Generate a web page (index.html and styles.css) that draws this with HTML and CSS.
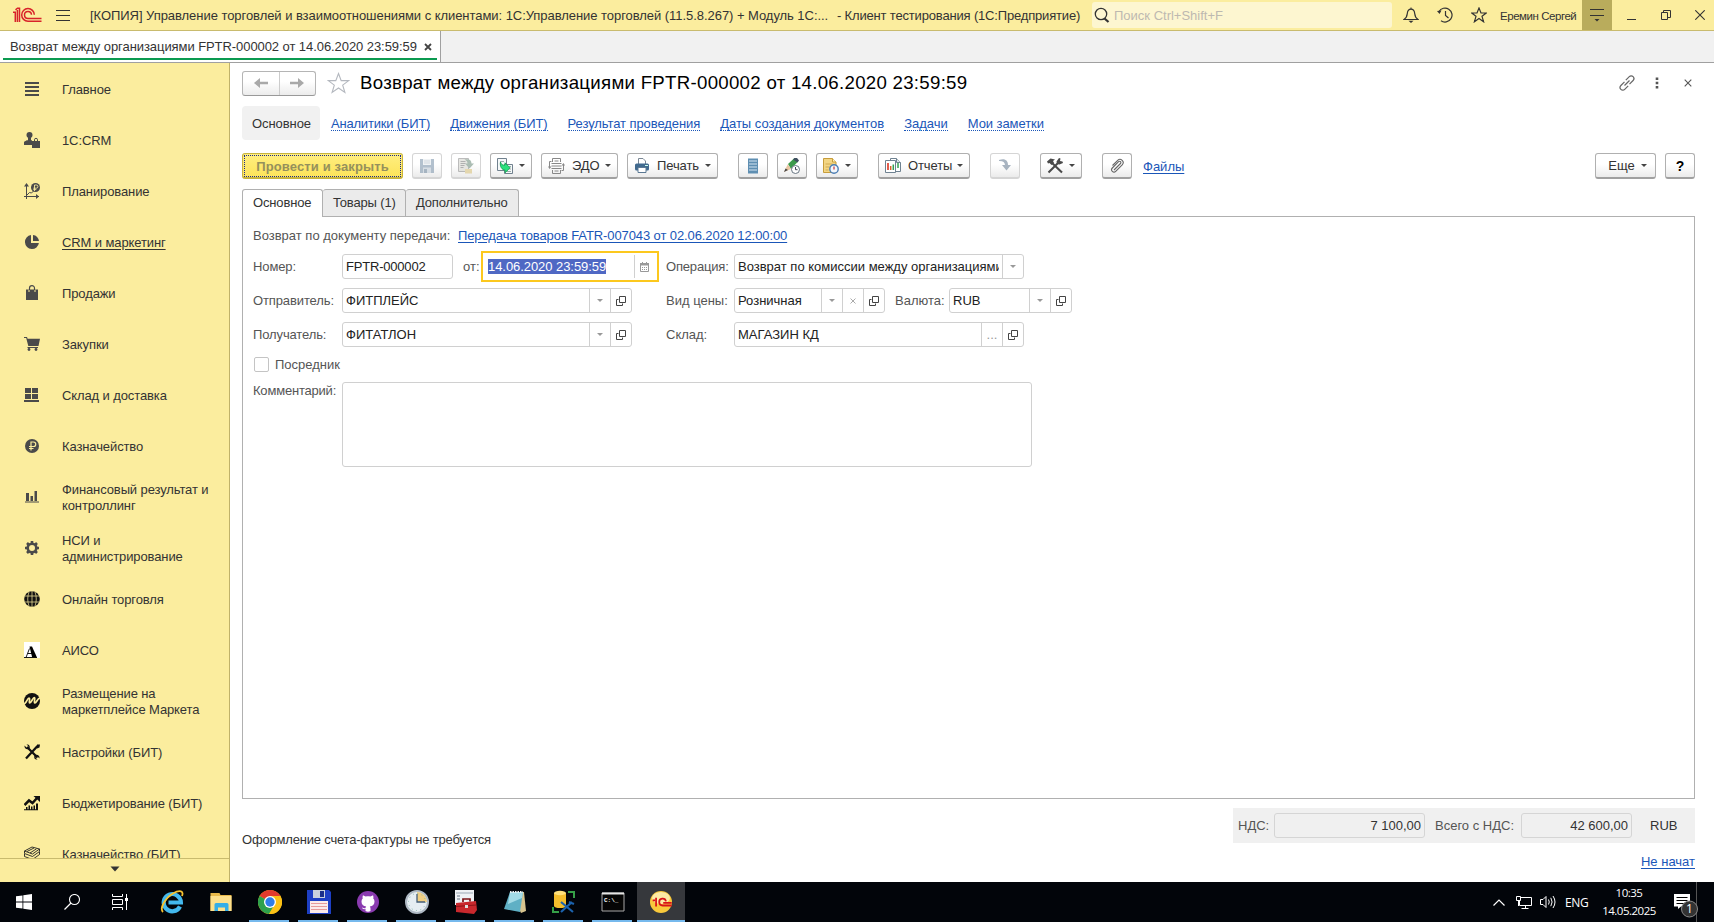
FILE: index.html
```html
<!DOCTYPE html>
<html lang="ru">
<head>
<meta charset="utf-8">
<title>Возврат между организациями</title>
<link rel="stylesheet" href="styles.css">
</head>
<body>
<svg class="defs" width="0" height="0">
  <symbol id="open" viewBox="0 0 10 10"><path d="M3.500.5h6v6h-6zM2.500 3.500h-2v6h6v-2" fill="none" stroke="#444"/></symbol>
  <symbol id="logo" viewBox="0 0 30 16"><g fill="none" stroke="#d8232a" stroke-width="1.500"><path d="M1 5.300h2.300V15M3.500 2.800 5.500 1.200h2V15M5.400 3v12"/><path d="M22.300 7.800a6.300 6.300 0 1 0-6.300 6.400h13.500M19.500 7.800a3.500 3.500 0 1 0-3.500 3.700h13.500"/></g></symbol>
</svg>

<header class="titlebar">
  <svg class="logo" viewBox="0 0 30 16"><use href="#logo"/></svg>
  <svg class="burger" viewBox="0 0 14 12"><path d="M0 1.500h14M0 6.500h14M0 11.500h14" stroke="#333"/></svg>
  <div class="app-title"><span class="t t1">[КОПИЯ] Управление торговлей и взаимоотношениями с клиентами: 1С:Управление торговлей (11.5.8.267) + Модуль 1С:...</span><span class="t t2">- Клиент тестирования (1С:Предприятие)</span></div>
  <div class="search"><svg viewBox="0 0 16 16"><circle cx="7" cy="7" r="5.700" fill="none" stroke="#333" stroke-width="1.300"/><path d="M10.500 11.500 14.500 15" stroke="#333" stroke-width="2.200"/></svg><span class="t">Поиск Ctrl+Shift+F</span></div>
  <div class="top-icons">
    <svg viewBox="0 0 16 16"><path d="M1 12.500c2.500-1.500 3-3 3.300-6C4.600 3.500 6 2.200 8 2.200s3.400 1.300 3.700 4.300c.3 3 .8 4.500 3.300 6z" fill="none" stroke="#333" stroke-width="1.200"/><path d="M8 .5v2" stroke="#333"/><path d="M5.500 13.800h5L8 16z" fill="#333"/></svg>
    <svg viewBox="0 0 16 16"><path d="M2 4.500A7 7 0 1 1 4 13.800M8.500 4v4.500l3 2.500" fill="none" stroke="#333" stroke-width="1.200"/><path d="M0 4l4.500-.5L2.500 7z" fill="#333"/></svg>
    <svg viewBox="0 0 16 16"><path d="M8 1l2 5h5.300l-4.300 3.300 1.600 5.500L8 11.600l-4.600 3.200L5 9.300.7 6H6z" fill="none" stroke="#333" stroke-width="1.200"/></svg>
  </div>
  <span class="t user">Еремин Сергей</span>
  <div class="menu-btn"><svg viewBox="0 0 14 14"><path d="M0 1.500h14M0 7.500h14" stroke="#333"/><path d="M4.500 11h5L7 13.500z" fill="#333"/></svg></div>
  <div class="win-icons">
    <svg viewBox="0 0 10 10"><path d="M0 9.500h9" stroke="#333"/></svg>
    <svg viewBox="0 0 10 10"><path d="M.5 2.500h6v7h-6zM2.500 2.500v-2h7v7h-3" fill="none" stroke="#333"/></svg>
    <svg viewBox="0 0 10 10"><path d="M.3.3l9.400 9.400M9.700.3.3 9.700" stroke="#333" stroke-width="1.100"/></svg>
  </div>
</header>

<div class="tabbar">
  <div class="wtab"><span class="t">Возврат между организациями FPTR-000002 от 14.06.2020 23:59:59</span><svg viewBox="0 0 8 8"><path d="M1 1l6 6M7 1 1 7" stroke="#444" stroke-width="1.800"/></svg></div>
</div>

<div class="main">
  <aside class="side">
    <nav class="side-list">
      <a><svg viewBox="0 0 16 16"><path d="M1 2h14M1 6h14M1 10h14M1 14h14" stroke="#4a4a4a" stroke-width="2"/></svg><span class="t">Главное</span></a>
      <a><svg viewBox="0 0 16 16" fill="#4a4a4a"><circle cx="5.500" cy="3" r="3"/><path d="M4 5h3v3l1 .5V13H0v-2.500C0 9 3 8.500 4 8zM8 9h8v7H8z"/><path d="M10.500 9V7.800a1.500 1.500 0 0 1 3 0V9" fill="none" stroke="#4a4a4a"/></svg><span class="t">1С:CRM</span></a>
      <a><svg viewBox="0 0 16 16"><path d="M2.500 1v15M0 13.500h15M3 12l2.500-2.500 2 .5L10 7.500" fill="none" stroke="#4a4a4a"/><path d="M0 3.500 2.500 0 5 3.500zM12 11l3 2.500-3 2.500z" fill="#4a4a4a"/><circle cx="11.500" cy="4.500" r="4.500" fill="#4a4a4a"/><path d="M10.500 8V2h1.800a1.500 1.500 0 0 1 0 3.200H9.300M9.300 6.600h3" stroke="#fbed9e" stroke-width=".9" fill="none"/></svg><span class="t">Планирование</span></a>
      <a class="on"><svg viewBox="0 0 16 16" fill="#4a4a4a"><path d="M7 1.100V9h7.900A7 7 0 1 1 7 1.100z"/><path d="M9 1a6.500 6.500 0 0 1 6 6H9z"/></svg><span class="t">CRM и маркетинг</span></a>
      <a><svg viewBox="0 0 16 16"><path d="M2 4.500h12V15H2z" fill="#4a4a4a"/><path d="M5 7V4.500M11 7V4.500" stroke="#fbed9e"/><path d="M5.500 5V3.200a2.500 2.500 0 0 1 5 0V5" fill="none" stroke="#4a4a4a" stroke-width="1.200"/></svg><span class="t">Продажи</span></a>
      <a><svg viewBox="0 0 16 16" fill="#4a4a4a"><path d="M0 1h3l.6 1.800H16L14.500 10H4.300L2.200 2H0zM3.500 11H14v1H3.500z"/><circle cx="5" cy="13.500" r="1.400"/><circle cx="12" cy="13.500" r="1.400"/></svg><span class="t">Закупки</span></a>
      <a><svg viewBox="0 0 16 16" fill="#4a4a4a"><path d="M1 1h6v5H1zM8 1h6v5H8zM1 7h6v5H1zM8 7h6v5H8zM0 13h15v2H0z"/></svg><span class="t">Склад и доставка</span></a>
      <a><svg viewBox="0 0 16 16"><circle cx="8" cy="8" r="7" fill="#4a4a4a"/><path d="M7 12.500V4h2.500a2 2 0 0 1 0 4.500H5M5 10.500h4.500" stroke="#fbed9e" stroke-width="1.200" fill="none"/></svg><span class="t">Казначейство</span></a>
      <a><svg viewBox="0 0 16 16" fill="#4a4a4a"><path d="M2 4h3v8H2zM6.500 7h2.500v5H6.500zM10.500 2h2.500v10h-2.500zM1 12.500h14v1H1z"/></svg><span class="t">Финансовый результат и<br>контроллинг</span></a>
      <a><svg viewBox="0 0 16 16"><circle cx="8" cy="8" r="4.300" fill="none" stroke="#4a4a4a" stroke-width="2.600"/><path d="M8 1v2.500M8 12.500V15M1 8h2.500M12.500 8H15M3 3l2 2M11 11l2 2M13 3l-2 2M5 11l-2 2" stroke="#4a4a4a" stroke-width="2.600"/></svg><span class="t">НСИ и<br>администрирование</span></a>
      <a><svg viewBox="0 0 16 16"><circle cx="8" cy="8" r="7.800" fill="#111"/><path d="M8 0v16M.5 5h15M.5 11h15M5 1C3.300 5.500 3.300 10.500 5 15M11 1c1.700 4.500 1.700 9.500 0 14" stroke="#fbed9e" stroke-width=".7" fill="none"/></svg><span class="t">Онлайн торговля</span></a>
      <a><svg viewBox="0 0 16 16"><path d="M0 0h16v16H0z" fill="#fff"/><path d="M5.500 4.500h2.500L13 15.500H8.200z" fill="#000"/><path d="M5.500 6.500 2 15.500M4 11.500h4M0 15.500h13" stroke="#000" stroke-width=".9"/></svg><span class="t">АИСО</span></a>
      <a><svg viewBox="0 0 16 16"><circle cx="8" cy="8" r="8" fill="#111"/><path d="M0 11c2 0 3.500-6 5-6s-.5 5 .8 5S9 4.500 10.300 4.500 9.500 10 11 10c1.500 0 2.500-5 5-5" stroke="#fbed9e" stroke-width="1.700" fill="none"/></svg><span class="t">Размещение на<br>маркетплейсе Маркета</span></a>
      <a><svg viewBox="0 0 16 16"><path d="M3 3l10.500 10.500M13.500 2 2 14.500" stroke="#111" stroke-width="2.300"/><path d="M.5 1.500 3 4l1.500-1.800L2.500.5C5 0 6.500 2 5.500 4.500 3.500 6 0 5 .5 1.500zM15.500 14.500 13 12l-1.500 1.800 2 1.700c-2.500.5-4-1.500-3-4 2-1.500 5.500-.5 5 3zM13 .5l3 0-.5 3-2.500 1z" fill="#111"/></svg><span class="t">Настройки (БИТ)</span></a>
      <a><svg viewBox="0 0 16 16"><path d="M.5 10 5 5.500l3.500 2.500L13 3" stroke="#111" stroke-width="2.500" fill="none"/><path d="M9.500 1H16v6zM2 12h1.500v3H2zM4.500 10.500H6V15H4.500zM7 11.500h1.500V15H7zM9.500 10.500H11V15H9.500zM12 8.500h2V15h-2zM0 14.300h14v1H0z" fill="#111"/></svg><span class="t">Бюджетирование (БИТ)</span></a>
      <a><svg viewBox="0 0 16 16"><path d="M.5 5 8 1l7.500 2L8.500 8zM.5 5v2.500l8 3 7-5V3M.5 8v2.500l8 3 7-5V6M3 5.500 10 2M6 7l6.500-4.200" stroke="#222" fill="none" stroke-width=".9"/></svg><span class="t">Казначейство (БИТ)</span></a>
    </nav>
    <div class="side-more"><svg viewBox="0 0 10 6"><path d="M.5.5h9L5 5.500z" fill="#333"/></svg></div>
  </aside>

  <section class="doc">
    <div class="doc-head">
      <div class="nav-btns"><span><svg viewBox="0 0 14 10"><path d="M0 5l6-5v3.800h8v2.400H6V10z" fill="#a9a9a9"/></svg></span><span><svg viewBox="0 0 14 10"><path d="M14 5 8 0v3.800H0v2.400h8V10z" fill="#a9a9a9"/></svg></span></div>
      <svg class="fav" viewBox="0 0 23 22"><path d="M11.500 1.500l2.700 7.100h7.500l-6 4.500 2.200 7.400-6.400-4.500-6.400 4.500 2.200-7.400-6-4.500h7.500z" fill="none" stroke="#b4b8bf" stroke-width="1.100"/></svg>
      <h1><span class="t">Возврат между организациями FPTR-000002 от 14.06.2020 23:59:59</span></h1>
      <div class="head-icons">
        <svg class="i16" viewBox="0 0 16 16"><g fill="none" stroke="#666" stroke-width="1.200"><path d="M6.800 5.200l3.500-3.500a2.600 2.600 0 0 1 3.800 3.800L10.500 9.200M9.200 10.800l-3.500 3.500a2.600 2.600 0 0 1-3.800-3.800L5.500 6.800M5.500 10.500l5-5"/></g></svg>
        <svg class="dots" viewBox="0 0 4 12"><path d="M.7.500h2.600v2.600H.7zM.7 4.700h2.600v2.600H.7zM.7 8.900h2.600v2.600H.7z" fill="#555"/></svg>
        <svg class="i8" viewBox="0 0 8 8"><path d="M.7.7l6.600 6.600M7.300.7.7 7.300" stroke="#555" stroke-width="1.100"/></svg>
      </div>
    </div>

    <nav class="links">
      <span class="cur t">Основное</span><a class="t bit">Аналитики (БИТ)</a><a class="t">Движения (БИТ)</a><a class="t">Результат проведения</a><a class="t wide">Даты создания документов</a><a class="t wide">Задачи</a><a class="t">Мои заметки</a>
    </nav>

    <div class="toolbar">
      <button class="primary"><span class="t">Провести и закрыть</span></button>
      <button class="sq off"><svg viewBox="0 0 16 16"><path d="M1 1h14v14H1z" fill="#8ba0b4"/><path d="M4 1h8v6H4z" fill="#e8ecef"/><path d="M5 3h6M5 5h6" stroke="#b7c3cd"/><path d="M4 9.500h8V15H4z" fill="#c5d0da"/><path d="M5 11h3v4H5z" fill="#7d92a6"/></svg></button>
      <button class="sq off"><svg viewBox="0 0 16 16"><path d="M.5.5h10v13H.5z" fill="#dadad4" stroke="#999"/><path d="M2.500 3.500h5M2.500 5.500h5M2.500 7.500h4M2.500 9.500h3" stroke="#888"/><path d="M7 11h7v4.500H7z" fill="#ddc98a"/><path d="M6.500 1.500c4.500-1 7 .5 7 4H16l-4.500 5L7 5.500h2.500c0-1.800-1-3-3-4z" fill="#7f9a8c"/></svg></button>
      <button class="dd"><svg viewBox="0 0 16 16"><path d="M.5.5h9v12h-9z" fill="#f6f8f9" stroke="#71818e"/><path d="M3 3.500h4M3 6h2" stroke="#9aa"/><path d="M7.500 6.500h8v9h-8z" fill="#f6f8f9" stroke="#71818e"/><path d="M12 8.500h2M12 11h2M10 13.500h4" stroke="#9aa"/><path d="M3.500 4C4 6.500 5.500 7.500 8 7V4.800l5 5-4.800 5v-2.600C5 12 2.500 8.500 3.500 4z" fill="#2be07c" stroke="#0a9a4a" stroke-width=".8"/></svg><i></i></button>
      <button class="dd edo"><svg viewBox="0 0 17 16"><g fill="none" stroke="#888"><path d="M4.500 4V.5h8V4M4.500 12v3.500h8V12M3.500 5.500h10M3.500 8h10M3.500 10.500h10M6.500 3h4M6.500 13h4"/><path d="M3.500 3.500h-2v6M13.500 12.500h2v-6"/></g><path d="M0 8.500h3.500L1.500 11zM13.500 7.500H17L15.500 5z" fill="#888"/></svg><span class="t">ЭДО</span><i></i></button>
      <button class="dd prn"><svg viewBox="0 0 16 16"><path d="M4.500 6V.5H9L11.500 3v3" fill="#fff" stroke="#7a8794"/><rect x="1" y="5.500" width="14" height="7" rx="1.500" fill="#416a8f"/><path d="M4 9.500h8v5H4z" fill="#fff" stroke="#5b7893"/><path d="M11 7.500h3" stroke="#cfe"/></svg><span class="t">Печать</span><i></i></button>
      <button class="sq g20"><svg viewBox="0 0 16 16"><path d="M3 .5h10v15H3z" fill="#5f8fb2"/><path d="M4 3h8M4 6h8M4 9h8M4 12h8" stroke="#d5e6f1" stroke-width="1.200"/></svg></button>
      <button class="sq"><svg viewBox="0 0 16 16"><path d="M4 6l6.500-6L14 3.500 7 11z" fill="#3d9a4c"/><path d="M9 1.500 10.500 0H13l2 2.500-1.500 2z" fill="#3f4f60"/><path d="M3.800 6.200 7 11l-7 3z" fill="#e9c6a2"/><path d="M0 14l1.500-3.500L4 12z" fill="#444"/><circle cx="11.500" cy="11.500" r="4" fill="#fff" stroke="#667480"/><path d="M11.500 9v2.700h2" stroke="#445" fill="none"/></svg></button>
      <button class="dd"><svg viewBox="0 0 16 16"><path d="M.5.5h9L13 4v10.500H.5z" fill="#f3d684" stroke="#c79d3b"/><path d="M9.500.5V4H13" fill="#fff1c0" stroke="#c79d3b"/><path d="M2.500 6h7M2.500 9h4M2.500 12h3" stroke="#d1aa50"/><circle cx="11" cy="11" r="4.200" fill="#f3f7fb" stroke="#4b7db4" stroke-width="1.400"/><path d="M11 8.500v3" stroke="#c33" stroke-width="1.200"/></svg><i></i></button>
      <button class="dd rep g20"><svg viewBox="0 0 16 16"><path d="M5.500.5h6l4 4v9h-10z" fill="#fff" stroke="#6f8291"/><path d="M11.500.5v4h4" fill="#dfe6ea" stroke="#6f8291"/><path d="M.5 2.500h10v12H.500z" fill="#fff" stroke="#6f8291"/><path d="M3 5v7" stroke="#de3f2c" stroke-width="1.700"/><path d="M5.700 8v4" stroke="#d8632c" stroke-width="1.500"/><path d="M8.300 6.500V12M13 5v5" stroke="#35a351" stroke-width="1.500"/></svg><span class="t">Отчеты</span><i></i></button>
      <button class="sq off g20"><svg viewBox="0 0 16 16"><path d="M2 2c6-2 9 .5 9 5h3l-4.500 5.500L5 7h3C8 4.500 6 2.800 2 3z" fill="#7b8da0"/></svg></button>
      <button class="dd g20"><svg viewBox="0 0 16 16"><path d="M3.500 3.500 15 14.500M12 4 1.500 14.500" stroke="#4a4a4a" stroke-width="2.100"/><path d="M0 3.500 3.500.5 8 1.500 6 3l1 2-2.500 2-2-2L1 5.500zM9.500 3.500 12 0l1.500.5-.5 2.500 2.500.5.500 1.500-3.500 1.500-2.500-.5z" fill="#4a4a4a"/></svg><i></i></button>
      <button class="sq g20"><svg viewBox="0 0 16 16"><path d="M5 12l6.500-6.500a1.300 1.300 0 0 0-1.900-1.900L3.300 10a2.300 2.300 0 0 0 3.400 3.300l6.500-6.500a3.100 3.100 0 0 0-4.500-4.400L3.500 7.500" fill="none" stroke="#666" stroke-width="1.100"/></svg></button>
      <a class="files t">Файлы</a>
      <button class="more"><span class="t">Еще</span><i></i></button>
      <button class="help"><b>?</b></button>
    </div>

    <div class="ptabs"><span class="act"><span class="t">Основное</span></span><span><span class="t">Товары (1)</span></span><span><span class="t">Дополнительно</span></span></div>
    <div class="panel">
      <div class="r0"><span class="t lbl">Возврат по документу передачи:</span><a class="t">Передача товаров FATR-007043 от 02.06.2020 12:00:00</a></div>
      <div class="row">
        <span class="lbl l1"><span class="t">Номер:</span></span>
        <div class="fld w-num"><span class="t code">FPTR-000002</span></div>
        <span class="lbl l-ot"><span class="t">от:</span></span>
        <div class="fld date"><em><span class="t sel">14.06.2020 23:59:59</span></em><s><svg class="cal" viewBox="0 0 9 10"><path d="M.5 1.500h8v8h-8z" fill="none" stroke="#999"/><path d="M0 1h9v2.500H0zM2 0h1v1H2zM6 0h1v1H6z" fill="#999"/><path d="M2 5.500h5M2 7.500h5" stroke="#999" stroke-dasharray="1 1"/></svg></s></div>
        <span class="lbl l2"><span class="t op-lbl">Операция:</span></span>
        <div class="fld w290"><em><span class="t">Возврат по комиссии между организациями</span></em><s><i></i></s></div>
      </div>
      <div class="row">
        <span class="lbl l1"><span class="t">Отправитель:</span></span>
        <div class="fld w290"><em><span class="t">ФИТПЛЕЙС</span></em><s><i></i></s><s><svg class="op"><use href="#open"/></svg></s></div>
        <span class="lbl l2 far"><span class="t">Вид цены:</span></span>
        <div class="fld w151"><em><span class="t">Розничная</span></em><s><i></i></s><s><svg class="i6" viewBox="0 0 6 6"><path d="M.5.500l5 5M5.500.5l-5 5" stroke="#aaa"/></svg></s><s><svg class="op"><use href="#open"/></svg></s></div>
        <span class="lbl l3"><span class="t">Валюта:</span></span>
        <div class="fld w123"><em><span class="t">RUB</span></em><s><i></i></s><s><svg class="op"><use href="#open"/></svg></s></div>
      </div>
      <div class="row">
        <span class="lbl l1"><span class="t">Получатель:</span></span>
        <div class="fld w290"><em><span class="t">ФИТАТЛОН</span></em><s><i></i></s><s><svg class="op"><use href="#open"/></svg></s></div>
        <span class="lbl l2 far"><span class="t">Склад:</span></span>
        <div class="fld w290"><em><span class="t">МАГАЗИН КД</span></em><s class="ell">...</s><s><svg class="op"><use href="#open"/></svg></s></div>
      </div>
      <div class="chk"><span class="box"></span><span class="t lbl">Посредник</span></div>
      <div class="cmt"><span class="lbl l1"><span class="t">Комментарий:</span></span><div class="area"></div></div>
    </div>

    <div class="foot">
      <span class="t note">Оформление счета-фактуры не требуется</span>
      <div class="totals"><span class="lbl s1"><span class="t">НДС:</span></span><div class="num n1"><span class="t">7 100,00</span></div><span class="lbl s2"><span class="t">Всего с НДС:</span></span><div class="num n2"><span class="t">42 600,00</span></div><span class="cur2 t">RUB</span></div>
    </div>
    <div class="state"><a class="t">Не начат</a></div>
  </section>
</div>

<footer class="taskbar">
  <div class="sys"><svg class="s16" viewBox="0 0 16 16" fill="#fff"><path d="M0 2.300 6.500 1.400v6.200H0zM7.300 1.200 16 0v7.600H7.300zM0 8.400h6.500v6.200L0 13.700zM7.300 8.400H16V16l-8.700-1.200z"/></svg></div>
  <div class="sys"><svg class="s16" viewBox="0 0 16 16"><circle cx="10.500" cy="5.500" r="5" fill="none" stroke="#fff" stroke-width="1.100"/><path d="M7 9 .5 15.500" stroke="#fff" stroke-width="1.300"/></svg></div>
  <div class="sys"><svg class="s16" viewBox="0 0 16 16"><path d="M.5 0v2.500h10V0M.5 5.500h10v5H.5zM.5 16v-2.500h10V16M14.500 0v16" fill="none" stroke="#fff"/><path d="M13 4h3v3h-3z" fill="#fff"/></svg></div>
  <div class="app"><svg viewBox="0 0 24 24"><path d="M20 16.500A8.600 8.600 0 1 1 20.900 12.500H8.500" fill="none" stroke="#43b9ee" stroke-width="4.200"/><path d="M3 22C-1 18 6 7.500 13 3.500S24 1 22 6" fill="none" stroke="#f7c331" stroke-width="1.800"/></svg></div>
  <div class="app"><svg viewBox="0 0 24 24"><path d="M1.500 3h9l1 2h11v16h-21z" fill="#e8b94a"/><path d="M1.500 6h21v15h-21z" fill="#fde08c"/><path d="M5.500 21v-6.500Q5.500 13 7 13h11q1.500 0 1.500 1.500V21H16v-3.500H9V21z" fill="#35aee8"/></svg></div>
  <div class="app run"><svg viewBox="0 0 24 24"><circle cx="12" cy="12" r="12" fill="#fbc116"/><path d="M12 12 1.600 6A12 12 0 0 1 22.400 6z" fill="#e33b2e"/><path d="M1.600 6A12 12 0 0 0 11 24l5.500-9.500L12 12z" fill="#2da14c"/><path d="M12 6h10.400A12 12 0 0 1 11 24l6-9z" fill="#fbc116"/><circle cx="12" cy="12" r="6" fill="#fff"/><circle cx="12" cy="12" r="4.700" fill="#2f7de8"/></svg></div>
  <div class="app run"><svg viewBox="0 0 24 24"><path d="M0 0h22l2 2v22H0z" fill="#1d3fc4"/><path d="M6 0h12v8H6z" fill="#c9d2de"/><path d="M13 1h4v6h-4z" fill="#1a2f8a"/><path d="M3 11h18v12H3z" fill="#fbeaea"/><path d="M4 13.500h16M4 16.500h16M4 19.500h16" stroke="#e79a9a"/></svg></div>
  <div class="app run"><svg viewBox="0 0 24 24"><circle cx="12" cy="12" r="11" fill="#8a3bb0"/><path d="M9.500 21v-2c-2 .5-3-.3-3.500-1.500 1.500 0 1.500 1 3.500.8 0-.8.200-1.300.7-1.800-3-.4-4.700-1.800-4.700-5 0-1.300.4-2.300 1.200-3.100-.3-1-.2-2 .2-3 1.100 0 2 .6 2.900 1.200 1.500-.4 2.900-.4 4.400 0 .9-.6 1.800-1.200 2.900-1.200.4 1 .5 2 .2 3 .8.8 1.200 1.800 1.200 3.100 0 3.200-1.700 4.600-4.700 5 .5.500.7 1.200.7 2V21q-2.500 1.500-5 0z" fill="#fff"/></svg></div>
  <div class="app run"><svg viewBox="0 0 24 24"><circle cx="12" cy="12" r="11" fill="#e6edf3" stroke="#aeb9c4" stroke-width="2"/><path d="M12 12V2a10 10 0 0 1 10 10z" fill="#f1cf83"/><path d="M12 4v8h8" fill="none" stroke="#445e7a" stroke-width="1.300"/><circle cx="12" cy="12" r="8.500" fill="none" stroke="#8ba" stroke-dasharray="1 3.450"/></svg></div>
  <div class="app run"><svg viewBox="0 0 24 24"><path d="M1 0h19v15H1z" fill="#eef1f4"/><path d="M2 3h17" stroke="#9aa7b4"/><path d="M3 6h3M3 9h3" stroke="#678"/><path d="M2 13l20-2 1 9-3 4-18-2z" fill="#c9282d"/><path d="M9 12V9h7v2.500" stroke="#7c1215" fill="none" stroke-width="1.700"/><path d="M2 16.500l20-1.500" stroke="#8d1418"/><path d="M11 15h3v3h-3z" fill="#ddd"/></svg></div>
  <div class="app run"><svg viewBox="0 0 24 24"><path d="M7 2h14l2 19-5 2z" fill="#d8c48f"/><path d="M7 2h13l-3 20-16-3z" fill="#5fb0c5"/><path d="M7 2h13l-1 6L5 14z" fill="#a3dbe6"/><path d="M7 2h13" stroke="#e8eef0" stroke-width="2" stroke-dasharray="1.500 1"/></svg></div>
  <div class="app run"><svg viewBox="0 0 24 24"><path d="M2 3h12v13H2z" fill="#f4bd2c"/><ellipse cx="8" cy="3" rx="6" ry="2.200" fill="#ffe07a"/><ellipse cx="8" cy="16" rx="6" ry="2" fill="#f4bd2c"/><path d="M16 2h6v6M1 17v5h6" stroke="#35a047" stroke-width="2" fill="none"/><path d="M9 12l12 10M20 12 9 22M17 12l5 2" stroke="#1b62ad" stroke-width="2.200"/></svg></div>
  <div class="app run"><svg viewBox="0 0 24 24"><path d="M1 3h22v18H1z" fill="#050505" stroke="#a8a8a8"/><path d="M1 3.500h22" stroke="#e5e5e5" stroke-width="2"/><text x="3" y="12" class="cmd">C:\_</text></svg></div>
  <div class="app run active"><svg viewBox="0 0 24 24"><circle cx="12" cy="12" r="11" fill="#f9c93c"/><ellipse cx="12" cy="8" rx="9" ry="6" fill="#fdeaa5"/><g transform="translate(3 7) scale(.68)" fill="none" stroke="#d8131a" stroke-width="2.600"><path d="M1 5h3.500M6 1v13"/><path d="M20.500 6.500a5 5 0 1 0-5 6H29M16.500 8.500H29"/></g></svg></div>
  <div class="tray">
    <svg class="chev" viewBox="0 0 12 7"><path d="M.5 6.500 6 1l5.500 5.500" fill="none" stroke="#fff" stroke-width="1.200"/></svg>
    <svg class="s16" viewBox="0 0 16 16"><path d="M5 3.500h10.500v8H3.500V7M9.500 11.500v3M5.500 14.500h7M.5 2.500h4v4h-4zM2.500 6.500v5.500" fill="none" stroke="#fff"/></svg>
    <svg class="s16 spk" viewBox="0 0 16 16"><path d="M.5 5.500h2.500L6 2.500v11L3 10.500H.5zM8.500 5.500q1.500 2.500 0 5M10.800 3.800q2.600 4.200 0 8.400M13 2q4 6 0 12" fill="none" stroke="#fff"/></svg>
    <span class="eng t">ENG</span>
    <div class="clock"><span class="t">10:35</span><span class="t">14.05.2025</span></div>
    <div class="ac"><svg viewBox="0 0 24 24"><path d="M0 0h16v12.500H7L4 15v-2.500H0z" fill="#fff"/><path d="M2.500 3.500h11M2.500 6.500h11M2.500 9.500h8" stroke="#000"/><circle cx="15.500" cy="15" r="8" fill="#333" stroke="#8a8a8a"/><text x="15.500" y="19.300" text-anchor="middle" class="badge">1</text></svg></div>
  </div>
</footer>
</body>
</html>
```
FILE: styles.css
```css
* { box-sizing: border-box; }
body {
  margin: 0; width: 1714px; height: 922px; overflow: hidden;
  display: flex; flex-direction: column;
  font: 13px/16px "Liberation Sans", Arial, sans-serif; color: #333; background: #fff;
}
svg { display: block; flex: none; }
.defs { position: absolute; }
.t { white-space: nowrap; }
i { border: 3px solid transparent; border-top: 3px solid #444; border-bottom: 0; flex: none; }

/* title bar */
.titlebar { height: 31px; background: #fbed9e; border-bottom: 1px solid #c9bb6e; display: flex; align-items: center; padding-left: 12px; flex: none; }
.titlebar .t { padding-top: 2px; }
.logo { width: 30px; height: 16px; }
.burger { width: 14px; height: 12px; margin-left: 14px; }
.app-title { margin-left: 20px; width: 1002px; display: flex; }
.t1 { width: 747px; letter-spacing: -.05px; }
.t2 { letter-spacing: -.17px; }
.search { width: 300px; height: 26px; background: #fdf6d0; border-radius: 3px; display: flex; align-items: center; padding-left: 2px; color: #bdb9b0; gap: 4px; }
.search svg { width: 16px; height: 16px; }
.top-icons { display: flex; gap: 18px; margin-left: 11px; }
.top-icons svg { width: 16px; height: 16px; }
.user { margin-left: 13px; width: 82px; font-size: 11.5px; letter-spacing: -.45px; }
.menu-btn { width: 30px; height: 30px; background: #b9ac5c; display: flex; align-items: center; justify-content: center; }
.menu-btn svg { width: 14px; height: 14px; }
.win-icons { display: flex; gap: 24px; margin-left: 15px; }
.win-icons svg { width: 10px; height: 10px; }

/* window tabs */
.tabbar { height: 32px; background: #f1f1f1; border-bottom: 1px solid #a0a0a0; flex: none; }
.wtab { width: 441px; height: 31px; background: #fff; border-right: 1px solid #a0a0a0; padding: 8px 0 0 10px; display: flex; align-items: flex-start; position: relative; }
.wtab::after { content: ""; position: absolute; left: 3px; right: 3px; bottom: 2px; height: 2px; background: #0b9a50; }
.wtab .t { width: 414px; letter-spacing: -.07px; }
.wtab svg { width: 8px; height: 8px; margin-top: 4px; }

.main { flex: 1; display: flex; min-height: 0; }

/* sections sidebar */
.side { width: 230px; background: #fbed9e; border-right: 1px solid #c0b26a; display: flex; flex-direction: column; letter-spacing: -.11px; }
.side-list { height: 795px; overflow: hidden; display: flex; flex-direction: column; padding-top: 1px; }
.side-list a { height: 51px; flex: none; display: flex; align-items: center; padding-left: 24px; gap: 22px; }
.side-list svg { width: 16px; height: 16px; margin-top: -1px; }
.side-list .on .t { text-decoration: underline; text-underline-offset: 2px; }
.side-more { height: 24px; border-top: 1px solid #c9bb6e; display: flex; justify-content: center; padding-top: 7px; }
.side-more svg { width: 10px; height: 6px; }

/* document */
.doc { flex: 1; padding: 8px 19px 0 12px; display: flex; flex-direction: column; }
.doc-head { height: 24px; display: flex; align-items: center; }
.nav-btns { width: 74px; height: 25px; border: 1px solid #b5b5b5; border-bottom-color: #999; border-radius: 3px; display: flex; background: linear-gradient(#fff 40%, #ececec); }
.nav-btns span { flex: 1; display: flex; align-items: center; justify-content: center; }
.nav-btns span + span { border-left: 1px solid #ccc; }
.nav-btns svg { width: 14px; height: 10px; }
.fav { width: 23px; height: 22px; margin-left: 11px; }
h1 { margin: 0 0 0 10px; font-size: 18.67px; line-height: 22px; font-weight: normal; color: #000; letter-spacing: .28px; }
.head-icons { margin-left: auto; display: flex; align-items: center; padding-right: 3px; }
.i16 { width: 16px; height: 16px; }
.dots { width: 4px; height: 12px; margin: 0 25px 0 20px; }
.i8 { width: 8px; height: 8px; }

a { color: #1a56b8; }
.side a { color: #333; }
.links { margin-top: 11px; height: 34px; display: flex; align-items: center; gap: 20px; letter-spacing: -.08px; }
.links a { line-height: 13px; margin-top: 2px; border-bottom: 1px dotted #1a56b8; }
.links .bit { letter-spacing: -.2px; }
.links .wide { letter-spacing: -.01px; }
.links .cur { width: 78px; height: 34px; line-height: 35px; background: #f1f1f1; border-radius: 4px; padding-left: 10px; margin-right: -9px; }

.toolbar { margin-top: 13px; height: 26px; display: flex; align-items: center; gap: 9px; }
button { margin: 0; padding: 0; height: 26px; font: inherit; color: #333; border: 1px solid #b0b0b0; border-bottom: 2px solid #a0a0a0; border-radius: 3px; background: linear-gradient(#fff 45%, #ebebeb); display: flex; align-items: center; justify-content: center; flex: none; }
button svg { width: 16px; height: 16px; }
button .t, .files { padding-top: 1px; }
.primary { width: 161px; border-color: #c8b43c; background: linear-gradient(#ffee80, #fde45a); font-weight: bold; color: #95905c; letter-spacing: .13px; }
.primary .t { outline: 1px dotted #1a2a8c; width: 155px; height: 20px; line-height: 20px; }
.sq { width: 30px; }
.off { border-color: #d5d5d5; }
.off svg { opacity: .65; }
.dd { width: 42px; justify-content: flex-start; padding-left: 6px; }
.dd i { margin-left: auto; margin-right: 6px; }
.dd .t { margin-left: 7px; letter-spacing: -.1px; }
.edo { width: 77px; }
.edo svg { width: 17px; }
.prn { width: 91px; }
.rep { width: 92px; }
.g20 { margin-left: 11px; }
.files { margin-left: 2px; text-decoration: underline; text-underline-offset: 2px; }
.more { width: 61px; margin-left: auto; gap: 6px; padding-left: 4px; }
.help { width: 30px; font-size: 14px; color: #000; }

.ptabs { margin-top: 10px; height: 27px; display: flex; position: relative; z-index: 1; letter-spacing: -.16px; }
.ptabs > span { height: 27px; border: 1px solid #b0b0b0; border-left: 0; border-bottom: 0; border-radius: 3px 3px 0 0; background: #ebebeb; padding: 5px 0 0 10px; }
.ptabs > span:nth-child(2) { width: 83px; }
.ptabs > span:nth-child(3) { width: 113px; }
.ptabs > .act { width: 81px; height: 28px; background: #fff; border-left: 1px solid #b0b0b0; }
.panel { height: 583px; border: 1px solid #b0b0b0; padding: 11px 0 0 10px; }
.lbl { color: #555; }
.r0 { height: 26px; display: flex; gap: 6px; }
.r0 .lbl { width: 199px; }
.r0 a { letter-spacing: -.1px; }
.r0 a, .state a { text-decoration: underline; text-underline-offset: 2px; }
.row { height: 25px; margin-bottom: 9px; display: flex; align-items: center; }
.l1 { width: 89px; letter-spacing: -.12px; }
.l2 { width: 68px; margin-left: 7px; }
.op-lbl { letter-spacing: -.17px; }
.far { margin-left: 34px; }
.l3 { margin-left: 10px; width: 54px; }
.l-ot { width: 28px; padding-left: 10px; }
.fld { height: 25px; border: 1px solid #d0d0d0; border-radius: 3px; display: flex; align-items: center; padding-left: 3px; color: #222; }
.fld em { font-style: normal; flex: 1; overflow: hidden; white-space: nowrap; margin-right: 3px; }
.fld s { text-decoration: none; width: 21px; height: 23px; border-left: 1px solid #d0d0d0; display: flex; align-items: center; justify-content: center; flex: none; }
.fld i { border-top-color: #999; }
.code { letter-spacing: -.2px; }
.w-num { width: 111px; }
.date { width: 178px; height: 31px; margin: -3px 0; border: 2px solid #fcc81e; border-radius: 0; padding-left: 5px; }
.date s { width: 23px; padding-right: 3px; }
.sel { background: #4f68c4; color: #fff; letter-spacing: -.06px; }
.cal { width: 9px; height: 10px; }
.op { width: 10px; height: 10px; }
.i6 { width: 6px; height: 6px; }
.w290 { width: 290px; }
.w151 { width: 151px; }
.w123 { width: 123px; }
.fld .ell { color: #999; }
.chk { display: flex; align-items: center; gap: 6px; height: 16px; padding-left: 1px; }
.chk .t { padding-top: 1px; }
.box { width: 15px; height: 15px; border: 1px solid #c4c4c4; border-radius: 2px; }
.cmt { display: flex; margin-top: 10px; }
.cmt .l1 { padding-top: 1px; letter-spacing: -.2px; }
.area { width: 690px; height: 85px; border: 1px solid #d0d0d0; border-radius: 3px; }

.foot { margin-top: 9px; height: 35px; display: flex; justify-content: space-between; }
.note { align-self: flex-end; margin-bottom: -5px; letter-spacing: -.19px; }
.totals { width: 462px; background: #f0f0f0; display: flex; align-items: center; padding-left: 5px; }
.num { height: 25px; border: 1px solid #d5d5d5; border-radius: 3px; display: flex; align-items: center; justify-content: flex-end; padding-right: 3px; }
.s1 { width: 36px; }
.n1 { width: 151px; }
.s2 { width: 96px; padding-left: 10px; }
.n2 { width: 111px; }
.cur2 { margin-left: 18px; }
.state { margin-top: 11px; text-align: right; }

/* taskbar */
.taskbar { height: 40px; background: #02050a; color: #fff; display: flex; flex: none; font: 12px/15px "Open Sans", "Noto Sans", sans-serif; }
.sys { width: 48px; display: flex; align-items: center; justify-content: center; }
.sys + .app { margin-left: 3px; }
.app { width: 49px; display: flex; align-items: center; justify-content: center; position: relative; }
.app svg { width: 24px; height: 24px; }
.run::after { content: ""; position: absolute; left: 4px; width: 40px; bottom: 0; height: 2px; background: #76b9ed; }
.s16 { width: 16px; height: 16px; }
.active { width: 48px; background: #36383c; }
.active::after { left: 0; width: 48px; }
.cmd { font: bold 6px "Liberation Mono", monospace; fill: #fff; }
.badge { font: 12px "Open Sans", sans-serif; fill: #fff; }
.tray { margin-left: auto; width: 221px; display: flex; align-items: center; }
.chev { width: 12px; height: 7px; margin-right: 11px; }
.spk { margin-left: 8px; }
.eng { margin-left: 9px; width: 34px; letter-spacing: -.4px; }
.clock { width: 60px; display: flex; flex-direction: column; align-items: center; line-height: 18px; font-size: 11.5px; letter-spacing: -.5px; }
.ac { width: 38px; padding-left: 15px; border-right: 1px solid #555; height: 40px; padding-top: 12px; }
.ac svg { width: 24px; height: 24px; }
```
